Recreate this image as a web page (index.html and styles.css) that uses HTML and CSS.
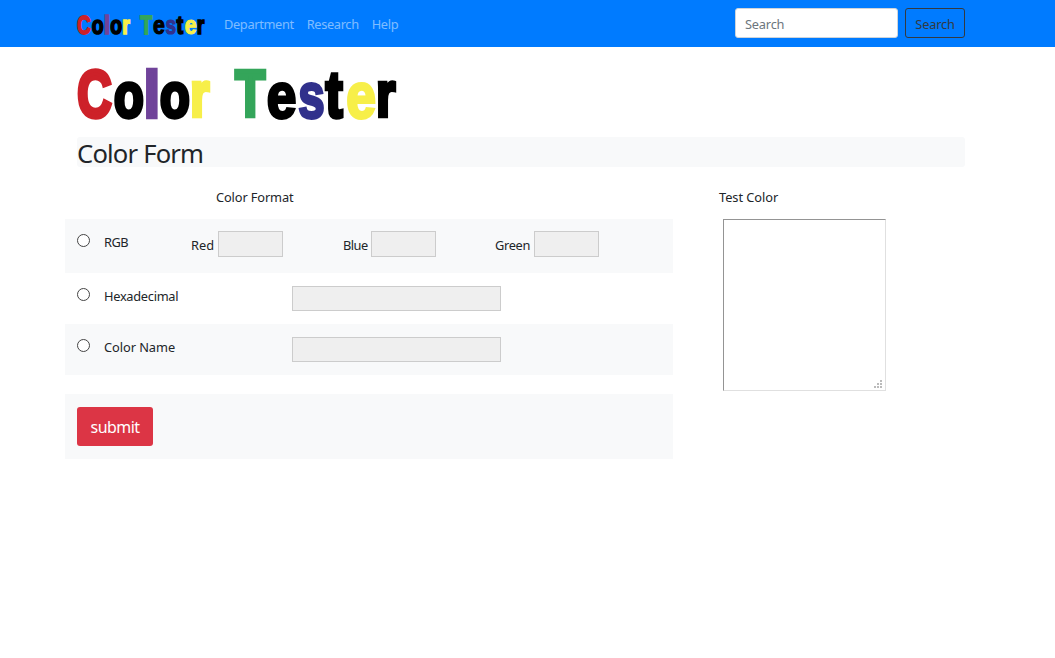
FILE: index.html
```html
<!DOCTYPE html>
<html lang="en">
<head>
<meta charset="utf-8">
<title>Color Tester</title>
<link rel="stylesheet" href="styles.css">
</head>
<body>
<nav class="navbar">
  <svg class="brand" viewBox="0 0 320 53" preserveAspectRatio="none"><use href="#logo"/></svg>
  <a class="nav-link department" href="#">Department</a>
  <a class="nav-link research" href="#">Research</a>
  <a class="nav-link" href="#">Help</a>
  <form class="search">
    <input class="search-input" type="text" placeholder="Search">
    <button class="search-button" type="button">Search</button>
  </form>
</nav>
<main class="container">
  <svg class="banner" viewBox="0 0 320 53" role="img" aria-label="Color Tester">
    <g id="logo" class="logo">
      <text class="red" transform="translate(.3 50.1) scale(.7 .985)">C</text>
      <text class="black" transform="translate(37 50.2) scale(.715 .935)">o</text>
      <text class="purple" transform="translate(67 49.5) scale(.83 .94)">l</text>
      <text class="black" transform="translate(83 50.2) scale(.715 .935)">o</text>
      <text class="yellow" transform="translate(113.2 49.3) scale(.72 .93)">r</text>
      <text class="green" transform="translate(158.2 49.3) scale(.72 .96)">T</text>
      <text class="black thin" transform="translate(189.8 50.5) scale(.785 .95)">e</text>
      <text class="blue thin" transform="translate(221.3 50.5) scale(.7 .95)">s</text>
      <text class="black" transform="translate(248.8 49.8) scale(.74 .94)">t</text>
      <text class="yellow thin" transform="translate(269.3 50.5) scale(.785 .95)">e</text>
      <text class="black" transform="translate(299.3 49.3) scale(.72 .93)">r</text>
    </g>
  </svg>
  <h1 class="title"><span class="title-text">Color Form</span></h1>
  <div class="columns">
    <form class="formats">
      <div class="heading">Color Format</div>
      <div class="row shaded rgb">
        <input class="radio" type="radio" name="format" id="rgb">
        <label class="name" for="rgb">RGB</label>
        <div class="channels">
          <label class="channel">Red<input class="field small" disabled></label>
          <label class="channel tight">Blue<input class="field small" disabled></label>
          <label class="channel green-channel">Green<input class="field small" disabled></label>
        </div>
      </div>
      <div class="row">
        <input class="radio" type="radio" name="format" id="hex">
        <label class="name hex-name" for="hex">Hexadecimal</label>
        <input class="field wide" disabled>
      </div>
      <div class="row shaded">
        <input class="radio" type="radio" name="format" id="color-name">
        <label class="name" for="color-name">Color Name</label>
        <input class="field wide" disabled>
      </div>
      <div class="actions shaded"><button class="submit" type="button">submit</button></div>
    </form>
    <section class="test">
      <div class="heading test-heading">Test Color</div>
      <div class="preview">
        <svg class="grip" viewBox="0 0 8 8" shape-rendering="crispEdges"><path d="M6 0h2v2H6zM3 3h2v2H3zM6 3h2v2H6zM0 6h2v2H0zM3 6h2v2H3zM6 6h2v2H6z"/></svg>
      </div>
    </section>
  </div>
</main>
</body>
</html>
```
FILE: styles.css
```css
* { box-sizing: border-box; }
body {
  margin: 0;
  background: #fff;
  color: #212529;
  font: 12.8px/19px "Noto Sans", "Open Sans", sans-serif;
}
.navbar {
  display: flex;
  align-items: center;
  height: 47px;
  padding: 0 90px 0 77px;
  background: #007bff;
}
.brand { width: 128px; height: 21px; margin: 2px 19px 0 0; overflow: visible; }
.nav-link { margin: 1px 13px 0 0; color: rgba(255,255,255,.5); letter-spacing: -.35px; text-decoration: none; }
.search { display: flex; gap: 7px; margin: -1px 0 0 auto; }
.search-input, .search-button {
  height: 30px;
  margin: 0;
  border-radius: 3px;
  font: inherit;
  letter-spacing: -.2px;
}
.search-input { width: 163px; padding: 2px 9px 0; border: 1px solid #ced4da; background: #fff; }
.search-input::placeholder { color: #6c757d; opacity: 1; }
.search-button { width: 60px; padding: 2px 0 0; border: 1px solid #343a40; background: transparent; color: #343a40; }
.container { padding: 20px 90px 0 65px; }
.banner { display: block; width: 320px; height: 53px; margin-left: 12px; overflow: visible; }
.logo { font: bold 68px "Liberation Sans", Arial, sans-serif; stroke-width: 4.6px; }
.thin { stroke-width: 3.2px; }
.red { fill: #cd2129; stroke: #cd2129; }
.black { fill: #000; stroke: #000; }
.purple { fill: #70439a; stroke: #70439a; }
.yellow { fill: #f7ef49; stroke: #f7ef49; }
.green { fill: #34a55a; stroke: #34a55a; }
.blue { fill: #31318c; stroke: #31318c; }
.title {
  height: 30px;
  margin: 17px 0 0 12px;
  border-radius: 3px;
  background: #f8f9fa;
  font-size: 25.6px;
  font-weight: 400;
  letter-spacing: -.8px;
  line-height: 34px;
}
.columns { display: flex; margin-top: 21px; }
.formats { width: 608px; }
.heading { height: 31px; padding-left: 151px; letter-spacing: -.12px; }
.row { display: flex; height: 51px; padding: 13px 12px 0; }
.row.rgb { height: 54px; padding-top: 12px; }
.shaded { background: #f8f9fa; }
.radio {
  appearance: none;
  width: 13px;
  height: 13px;
  margin: 2px 14px 0 0;
  border: 1px solid #444;
  border-radius: 50%;
  background: #fff;
}
.rgb .radio { margin-top: 3px; }
.name { width: 188px; padding-top: 1px; letter-spacing: -.05px; }
.hex-name { letter-spacing: -.28px; }
.rgb .name { width: 87px; padding-top: 2px; letter-spacing: -.5px; }
.channels { display: grid; grid-template-columns: 152px 152px 152px; }
.channel { display: flex; line-height: 28px; }
.tight { letter-spacing: -.55px; }
.green-channel { letter-spacing: -.35px; }
.field { border: 1px solid #ccc; background: #efefef; }
.small { width: 65px; height: 26px; margin: 0 0 0 4px; }
.tight .small { margin-left: 3.4px; }
.wide { width: 209px; height: 25px; margin: 0; }
.actions { height: 65px; margin-top: 19px; padding: 13px 12px; }
.submit {
  display: block;
  width: 76px;
  height: 39px;
  padding: 1px 0 0;
  border: 0;
  border-radius: 3px;
  background: #dc3545;
  color: #fff;
  font: 16px/24px "Noto Sans", "Open Sans", sans-serif;
  letter-spacing: -.55px;
}
.test { margin-left: 46px; }
.test-heading { padding-left: 0; letter-spacing: -.05px; }
.preview {
  display: flex;
  align-items: flex-end;
  justify-content: flex-end;
  width: 163px;
  height: 172px;
  margin-left: 4px;
  padding: 2px 3px;
  border: 1px solid;
  border-color: #949494 #e0e0e0 #e0e0e0 #949494;
}
.grip { width: 8px; height: 8px; fill: #bbb; }
```
